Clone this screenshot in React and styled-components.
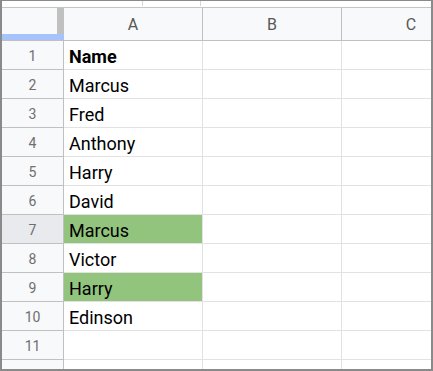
import React from "react";
import styled, { createGlobalStyle } from "styled-components";

const Global = createGlobalStyle`
  html, body { margin: 0; padding: 0; background: #fff; }
  body { font-family: Roboto, "Liberation Sans", Arial, sans-serif; }
`;

const Frame = styled.div`
  width: 433px;
  height: 371px;
  box-sizing: border-box;
  border: 1px solid #8a8a8a;
  border-left-width: 2px;
  border-right-width: 2px;
  border-bottom-width: 2px;
  overflow: hidden;
  display: flex;
  flex-direction: column;
  background: #fff;
`;

const TopStrip = styled.div`
  height: 6px;
  flex: none;
  border-bottom: 1px solid #c4c4c4;
  display: flex;
  align-items: flex-start;
  padding-left: 140px;
  gap: 57px;
`;

const Tick = styled.div`
  width: 1px;
  height: 5px;
  background: #d6d6d6;
`;

const Grid = styled.div`
  display: grid;
  grid-template-columns: 62px 139px 139px 139px;
  grid-template-rows: 33px;
  grid-auto-rows: 29px;
`;

const Corner = styled.div`
  background: #f8f9fa;
  border-right: 1px solid #c0c0c0;
  border-bottom: 1px solid #c0c0c0;
  display: flex;
  flex-direction: column;
  box-sizing: border-box;
`;

const CornerTop = styled.div`
  flex: 1;
  display: flex;
  justify-content: flex-end;
`;

const Handle = styled.div`
  width: 6px;
  background: #c0c0c0;
`;

const BlueBar = styled.div`
  height: 6px;
  background: #a6c4fb;
  margin-right: -1px;
`;

const ColHead = styled.div`
  background: #f8f9fa;
  border-right: 1px solid #c0c0c0;
  border-bottom: 1px solid #c0c0c0;
  box-sizing: border-box;
  display: flex;
  align-items: center;
  justify-content: center;
  color: #575757;
  font-size: 16px;
  padding-top: 1px;
`;

const RowHead = styled.div`
  background: ${(p) => (p.$active ? "#e8eaed" : "#f8f9fa")};
  border-right: 1px solid #c0c0c0;
  border-bottom: 1px solid #c0c0c0;
  box-sizing: border-box;
  display: flex;
  align-items: center;
  justify-content: center;
  color: #6f6f6f;
  font-size: 14px;
  padding-top: 2px;
`;

const Cell = styled.div`
  background: ${(p) => (p.$hl ? "#93c47d" : "#fff")};
  border-right: 1px solid #e2e2e2;
  border-bottom: 1px solid #e2e2e2;
  box-sizing: border-box;
  display: flex;
  align-items: center;
  padding: 3px 0 0 5px;
  font-size: 18px;
  font-weight: ${(p) => (p.$bold ? 700 : 400)};
  color: #000;
  white-space: nowrap;
  overflow: hidden;
`;

const names = [
  { t: "Name", bold: true },
  { t: "Marcus" },
  { t: "Fred" },
  { t: "Anthony" },
  { t: "Harry" },
  { t: "David" },
  { t: "Marcus", hl: true },
  { t: "Victor" },
  { t: "Harry", hl: true },
  { t: "Edinson" },
  { t: "" },
  { t: "" },
];

export default function App() {
  return (
    <>
      <Global />
      <Frame>
        <TopStrip>
          <Tick />
          <Tick />
        </TopStrip>
        <Grid>
          <Corner>
            <CornerTop>
              <Handle />
            </CornerTop>
            <BlueBar />
          </Corner>
          <ColHead>A</ColHead>
          <ColHead>B</ColHead>
          <ColHead>C</ColHead>
          {names.map((n, i) => (
            <React.Fragment key={i}>
              <RowHead $active={i === 6}>{i + 1}</RowHead>
              <Cell $bold={n.bold} $hl={n.hl}>{n.t}</Cell>
              <Cell />
              <Cell />
            </React.Fragment>
          ))}
        </Grid>
      </Frame>
    </>
  );
}
